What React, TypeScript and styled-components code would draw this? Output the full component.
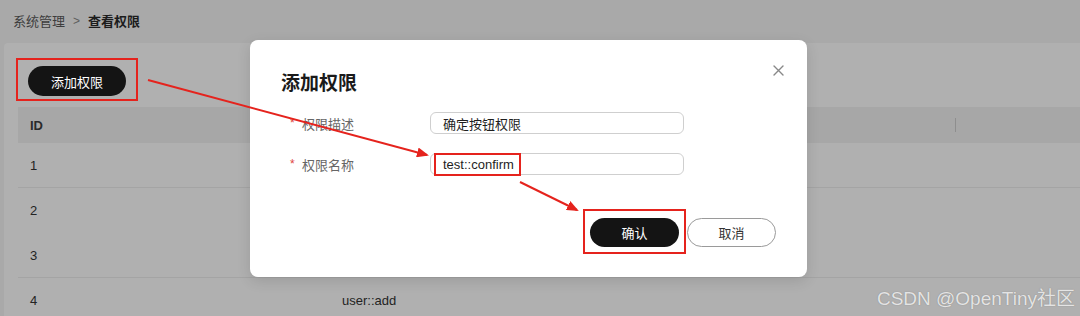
import React from 'react';
import styled, { createGlobalStyle } from 'styled-components';

const GlobalStyle = createGlobalStyle`
  html, body {
    margin: 0;
    padding: 0;
    background: #a9a9a9;
  }
  body {
    font-family: "Liberation Sans", "Noto Sans CJK SC", sans-serif;
    font-size: 13px;
    color: #222;
  }
  * {
    box-sizing: border-box;
  }
`;

type Inset = { t: number; r: number; b: number; l: number };

type Row = { id: number; name?: string; divider?: boolean };

const rows: Row[] = [
  { id: 1, divider: true },
  { id: 2 },
  { id: 3, divider: true },
  { id: 4, name: 'user::add' },
];

const Arrows = () => (
  <ArrowLayer width="1080" height="316" viewBox="0 0 1080 316">
    <defs>
      <marker id="head" markerWidth="12" markerHeight="10" refX="10" refY="5" orient="auto" markerUnits="userSpaceOnUse">
        <path d="M0 0 L12 5 L0 10 Z" fill="#e5231d" />
      </marker>
    </defs>
    <line x1="148" y1="80" x2="427" y2="155" stroke="#e5231d" strokeWidth="2" markerEnd="url(#head)" />
    <line x1="520" y1="182" x2="577" y2="210" stroke="#e5231d" strokeWidth="2" markerEnd="url(#head)" />
  </ArrowLayer>
);

export default function App() {
  return (
    <>
      <GlobalStyle />
      <Page>
        <Breadcrumb>
          <Crumb>系统管理</Crumb>
          <Separator>&gt;</Separator>
          <Crumb $current>查看权限</Crumb>
        </Breadcrumb>

        <Card>
          <Toolbar>
            <Highlight $inset={{ t: -8, r: -12, b: -5, l: -12 }}>
              <PrimaryButton $width={98} $height={30}>添加权限</PrimaryButton>
            </Highlight>
          </Toolbar>
          <Table>
            <HeaderRow>
              <Cell>ID</Cell>
              <Cell />
              <Cell>
                <ColumnDivider />
              </Cell>
            </HeaderRow>
            {rows.map((row) => (
              <BodyRow key={row.id} $divider={row.divider}>
                <Cell>{row.id}</Cell>
                <Cell>{row.name}</Cell>
                <Cell />
              </BodyRow>
            ))}
          </Table>
        </Card>

        <Dialog>
          <CloseButton aria-label="close">
            <svg width="11" height="11" viewBox="0 0 11 11">
              <path d="M1 1 L10 10 M10 1 L1 10" stroke="#888" strokeWidth="1.4" strokeLinecap="round" />
            </svg>
          </CloseButton>
          <Title>添加权限</Title>
          <Form>
            <FormRow>
              <Label>
                <Required>*</Required>权限描述
              </Label>
              <Field>确定按钮权限</Field>
            </FormRow>
            <FormRow>
              <Label>
                <Required>*</Required>权限名称
              </Label>
              <Field>
                <Highlight $inset={{ t: -4, r: -7, b: -4, l: -9 }}>test::confirm</Highlight>
              </Field>
            </FormRow>
          </Form>
          <Footer>
            <Highlight $inset={{ t: -9, r: -7, b: -7, l: -7 }}>
              <PrimaryButton $width={89} $height={29}>确认</PrimaryButton>
            </Highlight>
            <SecondaryButton>取消</SecondaryButton>
          </Footer>
        </Dialog>

        <Arrows />

        <Watermark>CSDN @OpenTiny社区</Watermark>
      </Page>
    </>
  );
}

const Page = styled.div`
  position: relative;
  width: 1080px;
  height: 316px;
  overflow: hidden;
  display: flex;
  flex-direction: column;
`;

const Breadcrumb = styled.nav`
  flex-shrink: 0;
  height: 43px;
  padding: 0 13px 2px;
  display: flex;
  align-items: center;
  gap: 8px;
  font-size: 13px;
`;

const Crumb = styled.span<{ $current?: boolean }>`
  color: ${(p) => (p.$current ? '#1c1c1c' : '#3d3d3d')};
  font-weight: ${(p) => (p.$current ? 700 : 400)};
`;

const Separator = styled.span`
  color: #5e5e5e;
  font-size: 12px;
`;

const Card = styled.section`
  flex: 1 0 auto;
  margin-left: 4px;
  padding: 23px 0 0 14px;
  background: #b0b0b0;
  border-top-left-radius: 4px;
`;

const Toolbar = styled.div`
  display: flex;
  padding-left: 10px;
  margin-bottom: 11px;
`;

const Highlight = styled.span<{ $inset: Inset }>`
  position: relative;
  display: inline-flex;

  &::after {
    content: '';
    position: absolute;
    top: ${(p) => p.$inset.t}px;
    right: ${(p) => p.$inset.r}px;
    bottom: ${(p) => p.$inset.b}px;
    left: ${(p) => p.$inset.l}px;
    border: 2px solid #e5231d;
    pointer-events: none;
  }
`;

const PrimaryButton = styled.button<{ $width: number; $height: number }>`
  width: ${(p) => p.$width}px;
  height: ${(p) => p.$height}px;
  border: none;
  border-radius: ${(p) => p.$height / 2}px;
  background: #141414;
  color: #fff;
  font-family: inherit;
  font-size: 13px;
  cursor: pointer;
`;

const SecondaryButton = styled.button`
  width: 89px;
  height: 29px;
  border: 1px solid #9a9a9a;
  border-radius: 15px;
  background: #fff;
  color: #333;
  font-family: inherit;
  font-size: 13px;
  cursor: pointer;
`;

const Table = styled.div`
  display: flex;
  flex-direction: column;
  width: 1100px;
`;

const HeaderRow = styled.div`
  display: grid;
  grid-template-columns: 312px 625px 1fr;
  height: 36px;
  align-items: center;
  background: #a7a7a7;
  font-weight: 700;
  color: #2b2b2b;
`;

const BodyRow = styled.div<{ $divider?: boolean }>`
  display: grid;
  grid-template-columns: 312px 625px 1fr;
  height: 45px;
  flex-shrink: 0;
  align-items: center;
  color: #232323;
  border-bottom: 1px solid ${(p) => (p.$divider ? '#a4a4a4' : 'transparent')};
`;

const Cell = styled.div`
  padding-left: 12px;
  display: flex;
  align-items: center;
`;

const ColumnDivider = styled.span`
  display: block;
  width: 1px;
  height: 14px;
  margin-left: -12px;
  background: #8e8e8e;
`;

const Dialog = styled.div`
  position: absolute;
  left: 250px;
  top: 40px;
  width: 557px;
  height: 237px;
  padding: 32px 31px 30px 31px;
  background: #fff;
  border-radius: 8px;
  box-shadow: 0 4px 14px rgba(0, 0, 0, 0.12);
  display: flex;
  flex-direction: column;
`;

const CloseButton = styled.button`
  position: absolute;
  top: 22px;
  right: 21px;
  width: 16px;
  height: 16px;
  padding: 0;
  border: none;
  background: none;
  display: flex;
  align-items: center;
  justify-content: center;
`;

const Title = styled.h2`
  margin: 0;
  font-size: 19px;
  line-height: 24px;
  font-weight: 700;
  color: #1a1a1a;
`;

const Form = styled.div`
  margin-top: 16px;
  display: flex;
  flex-direction: column;
  gap: 19px;
  padding-left: 9px;
`;

const FormRow = styled.div`
  display: flex;
  align-items: center;
`;

const Label = styled.label`
  width: 140px;
  color: #666;
  font-size: 13px;
  display: flex;
  align-items: center;
`;

const Required = styled.span`
  color: #e0443e;
  width: 12px;
  font-size: 12px;
`;

const Field = styled.div`
  width: 254px;
  height: 22px;
  padding: 0 12px;
  border: 1px solid #cfcfcf;
  border-radius: 6px;
  display: flex;
  align-items: center;
  font-size: 13px;
  color: #1e1e1e;
`;

const Footer = styled.div`
  margin-top: auto;
  display: flex;
  justify-content: flex-end;
  gap: 8px;
`;

const ArrowLayer = styled.svg`
  position: absolute;
  left: 0;
  top: 0;
  pointer-events: none;
`;

const Watermark = styled.div`
  position: absolute;
  right: 5px;
  bottom: 6px;
  font-size: 19px;
  color: rgba(255, 255, 255, 0.78);
  text-shadow: 0 0 1px rgba(90, 90, 90, 0.6);
  pointer-events: none;
`;
